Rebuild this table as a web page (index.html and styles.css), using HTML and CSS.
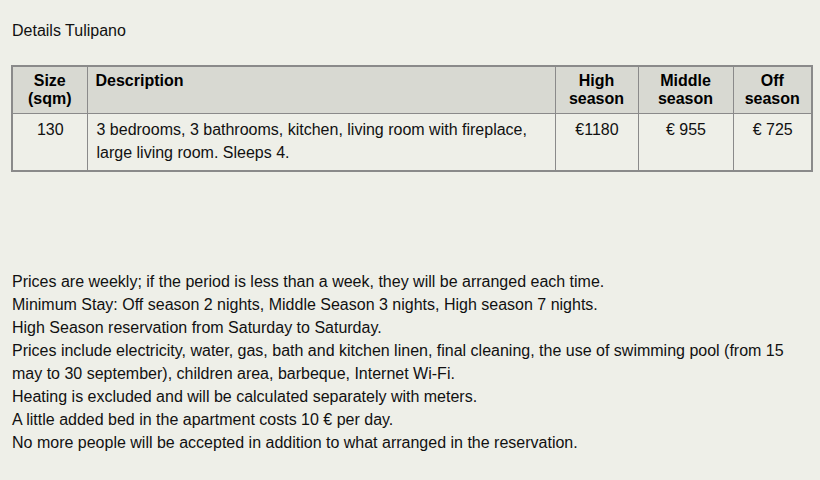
FILE: index.html
```html
<!DOCTYPE html>
<html>
<head>
<meta charset="utf-8">
<link rel="stylesheet" href="styles.css">
</head>
<body>
<div class="page">
  <p class="title">Details Tulipano</p>
  <table class="prices">
    <colgroup>
      <col class="c-size">
      <col class="c-desc">
      <col class="c-high">
      <col class="c-mid">
      <col class="c-off">
    </colgroup>
    <thead>
      <tr>
        <th class="center">Size<br>(sqm)</th>
        <th class="left">Description</th>
        <th class="center">High<br>season</th>
        <th class="center">Middle<br>season</th>
        <th class="center">Off<br>season</th>
      </tr>
    </thead>
    <tbody>
      <tr>
        <td class="center">130</td>
        <td class="left">3 bedrooms, 3 bathrooms, kitchen, living room with fireplace, large living room. Sleeps 4.</td>
        <td class="center">€1180</td>
        <td class="center">€ 955</td>
        <td class="center">€ 725</td>
      </tr>
    </tbody>
  </table>
  <div class="notes">
    <p>Prices are weekly; if the period is less than a week, they will be arranged each time.</p>
    <p>Minimum Stay: Off season 2 nights, Middle Season 3 nights, High season 7 nights.</p>
    <p>High Season reservation from Saturday to Saturday.</p>
    <p>Prices include electricity, water, gas, bath and kitchen linen, final cleaning, the use of swimming pool (from 15 may to 30 september), children area, barbeque, Internet Wi-Fi.</p>
    <p>Heating is excluded and will be calculated separately with meters.</p>
    <p>A little added bed in the apartment costs 10 € per day.</p>
    <p>No more people will be accepted in addition to what arranged in the reservation.</p>
  </div>
</div>
</body>
</html>
```
FILE: styles.css
```css
html, body {
  margin: 0;
  padding: 0;
  background: #eeefe8;
}
body {
  font-family: "Liberation Sans", Arial, sans-serif;
  font-size: 16px;
  line-height: 23px;
  color: #111;
}
.page {
  padding: 19px 12px 0 12px;
}
p {
  margin: 0;
}
.title {
  margin-bottom: 23px;
}
.prices {
  border-collapse: collapse;
  table-layout: fixed;
  width: 800px;
  margin-left: -1px;
  border: 2px solid #8a8a8a;
}
.c-size { width: 75px; }
.c-desc { width: 468px; }
.c-high { width: 83px; }
.c-mid { width: 95px; }
.c-off { width: 79px; }
.prices th, .prices td {
  border: 1px solid #8a8a8a;
  vertical-align: top;
}
.prices th {
  background: #d8d9d2;
  font-weight: bold;
  line-height: 18px;
  padding: 5px 8px 5px 8px;
  color: #000;
}
.prices td {
  padding: 4px 8px 6px 9px;
}
.center { text-align: center; }
.left { text-align: left; }
.notes {
  margin-top: 98px;
}
```
